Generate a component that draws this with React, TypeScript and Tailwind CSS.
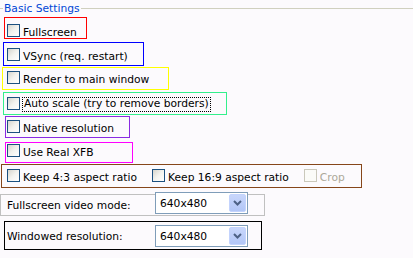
import React from "react";

const font = { fontFamily: '"DejaVu Sans", Verdana, sans-serif' };

function CheckBox({ disabled = false }: { disabled?: boolean }) {
  return (
    <span
      className={
        disabled
          ? "block w-[13px] h-[13px] shrink-0 border border-[#cac8bb] bg-[#fbfbf8]"
          : "block w-[13px] h-[13px] shrink-0 border border-[#1c5180] bg-gradient-to-br from-[#d6d5cd] via-[#f3f3ef] to-white"
      }
    />
  );
}

function Check({ label, focus = false, disabled = false }: { label: string; focus?: boolean; disabled?: boolean }) {
  return (
    <div className="flex items-start h-[16px]">
      <CheckBox disabled={disabled} />
      <span
        className={
          (focus ? "ml-[2px] px-[1px] border border-dotted border-black leading-[12px] h-[15px] " : "ml-[3px] leading-[13px] pt-[2px] ") +
          (disabled ? "text-[#aca899]" : "text-black") +
          " whitespace-nowrap text-[10.7px]"
        }
      >
        {label}
      </span>
    </div>
  );
}

function Combo({ value }: { value: string }) {
  return (
    <div className="flex items-center w-[93px] h-[22px] border border-[#7f9db9] bg-white p-px shrink-0">
      <span className="flex-1 pl-[3px] text-[10.7px] leading-[13px] pt-[1px] text-black">{value}</span>
      <span className="flex items-center justify-center w-[17px] h-[18px] rounded-[2px] border border-[#c3d3fd] bg-gradient-to-b from-[#c8d6fb] to-[#b2c6f7]">
        <svg width="9" height="6" viewBox="0 0 9 6">
          <path d="M1 1 L4.5 4.5 L8 1" fill="none" stroke="#4d6185" strokeWidth="2" />
        </svg>
      </span>
    </div>
  );
}

export default function App() {
  return (
    <div className="w-[413px] h-[258px] overflow-hidden bg-[#fcfafd] flex flex-col" style={font}>
      {/* Group header */}
      <div className="flex items-center h-[17px]">
        <span className="w-[3px] h-px bg-[#d0d0bf]" />
        <span className="px-px text-[10.7px] leading-[13px] text-[#0046d5] whitespace-nowrap">Basic Settings</span>
        <span className="flex-1 h-px bg-[#d0d0bf]" />
      </div>

      <div className="ml-[4px] w-[83px] h-[22px] border border-[#ff0000] pl-[2px] pt-[6px]">
        <Check label="Fullscreen" />
      </div>
      <div className="ml-[3px] mt-[3px] w-[141px] h-[24px] border border-[#0000ff] pl-[3px] pt-[5px]">
        <Check label="VSync (req. restart)" />
      </div>
      <div className="ml-[2px] mt-[1px] w-[167px] h-[23px] border border-[#ffff00] pl-[4px] pt-[3px]">
        <Check label="Render to main window" />
      </div>
      <div className="ml-[3px] mt-[2px] w-[224px] h-[23px] border border-[#33f08c] pl-[3px] pt-[4px]">
        <Check label="Auto scale (try to remove borders)" focus />
      </div>
      <div className="ml-[5px] mt-[1px] w-[125px] h-[22px] border border-[#8a2be2] pl-[1px] pt-[3px]">
        <Check label="Native resolution" />
      </div>
      <div className="ml-[5px] mt-[4px] w-[128px] h-[21px] border border-[#ff00ff] pl-[1px] pt-px">
        <Check label="Use Real XFB" />
      </div>
      <div className="ml-[1px] mt-[1px] w-[361px] h-[24px] border border-[#86461a] pl-[5px] pt-[4px] flex gap-[15px]">
        <Check label="Keep 4:3 aspect ratio" />
        <Check label="Keep 16:9 aspect ratio" />
        <Check label="Crop" disabled />
      </div>

      <div className="mt-[6px] w-[265px] h-[22px] border border-[#c0c0c0] flex items-start">
        <span className="w-[154px] pl-[6px] pt-[4px] text-[10.7px] leading-[13px] text-black whitespace-nowrap">
          Fullscreen video mode:
        </span>
        <div className="-mt-[3px]">
          <Combo value="640x480" />
        </div>
      </div>

      <div className="ml-[4px] mt-[5px] w-[258px] h-[29px] border border-black flex items-center">
        <span className="w-[150px] pl-[2px] pt-[1px] text-[10.7px] leading-[13px] text-black whitespace-nowrap">
          Windowed resolution:
        </span>
        <Combo value="640x480" />
      </div>
    </div>
  );
}
